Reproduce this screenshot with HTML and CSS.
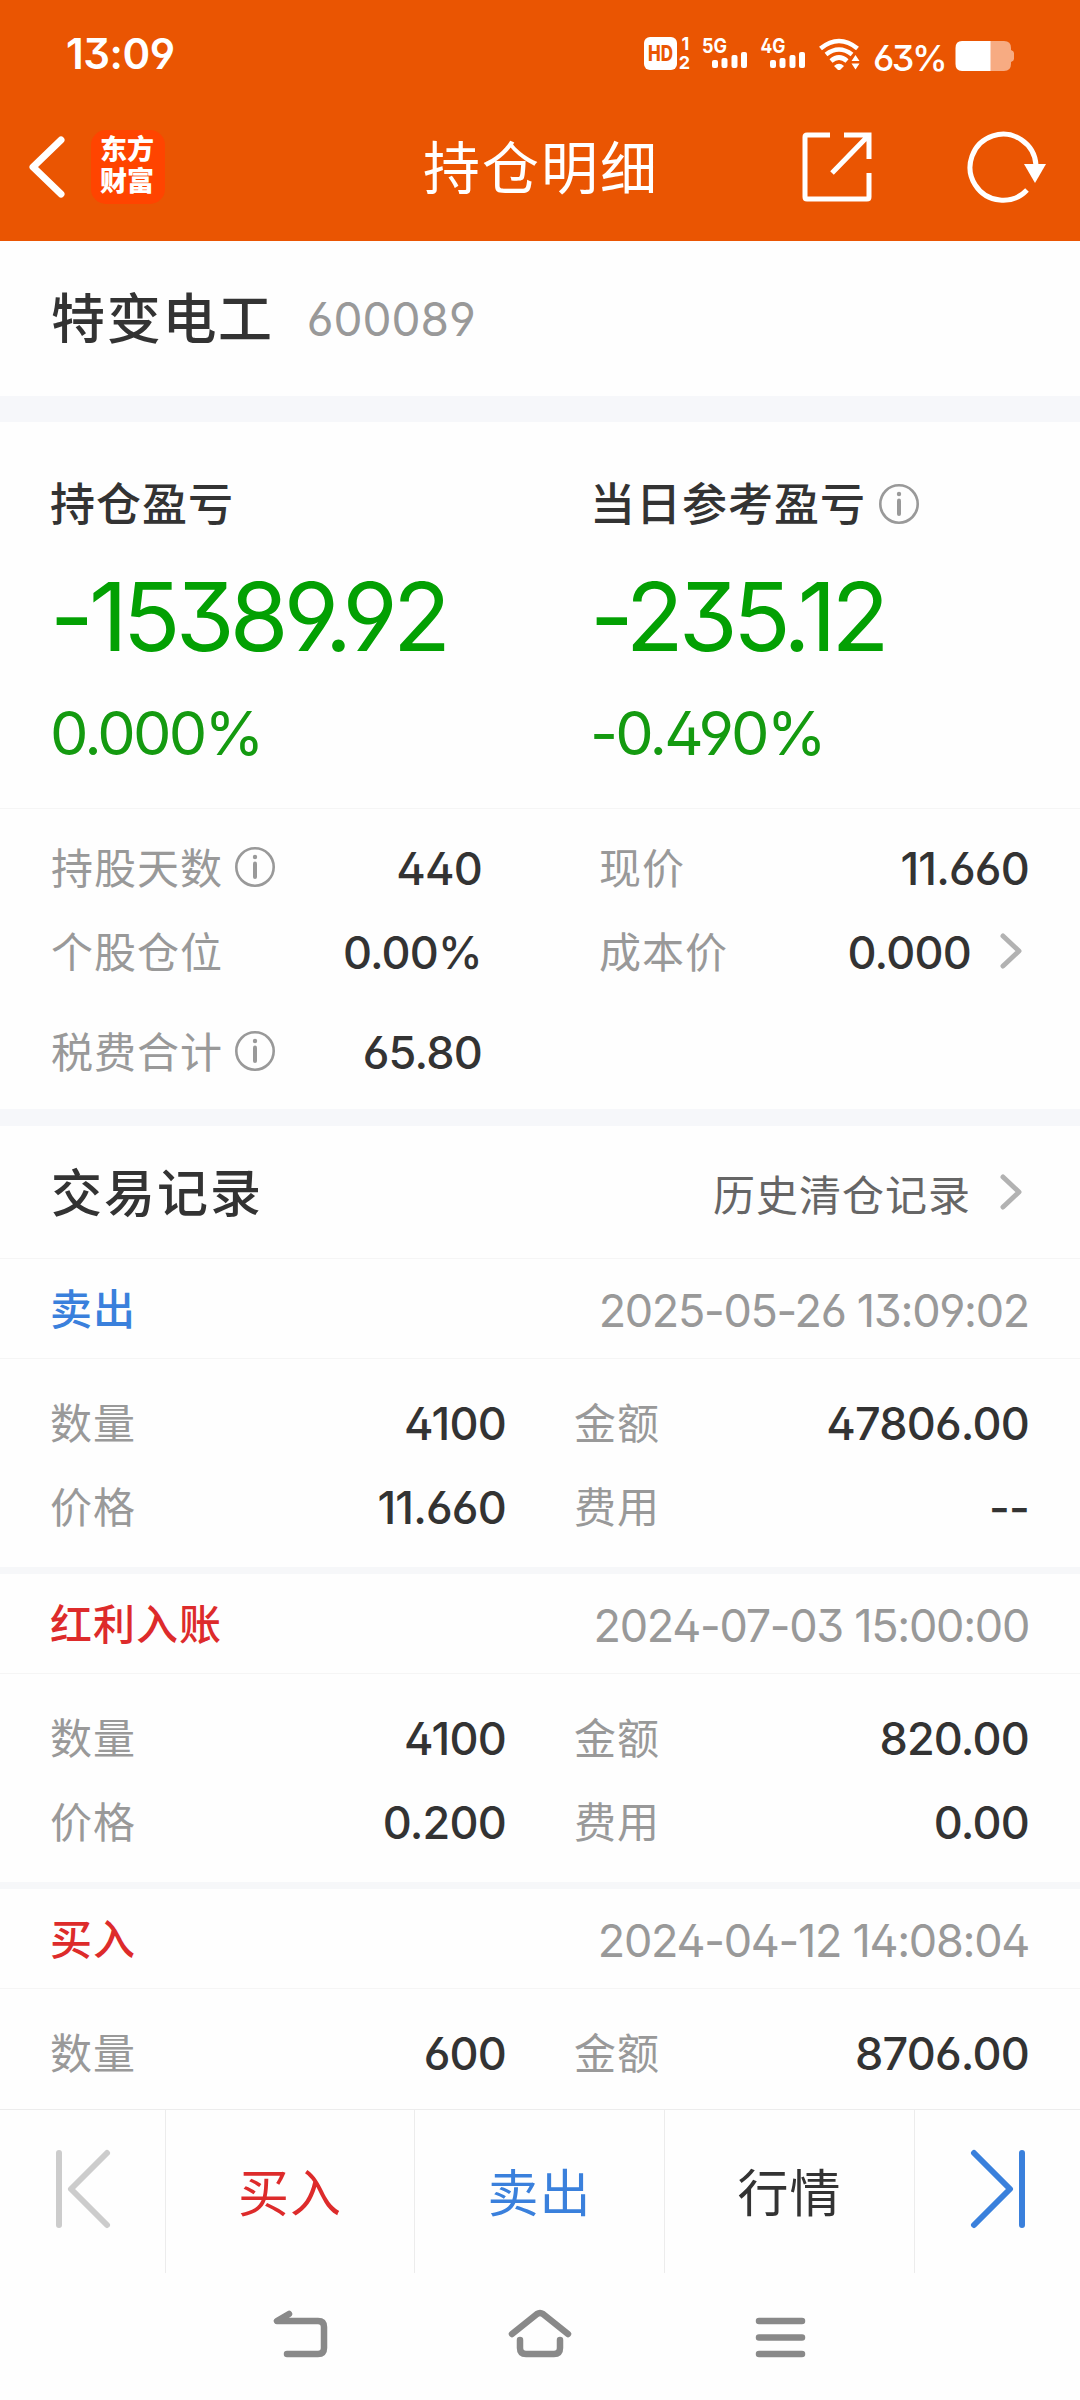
FILE: index.html
```html
<!DOCTYPE html>
<html lang="zh-CN">
<head>
    <meta charset="UTF-8">
    <meta name="viewport" content="width=device-width, initial-scale=1.0">
    <title>持仓明细</title>
    <link rel="stylesheet" href="styles.css">
</head>
<body>
    <div class="app">
        <header class="header">
            <div class="status-bar">
                <span class="time">13:09</span>
                <svg class="status-icons" width="220" height="40" viewBox="640 34 220 40" fill="#fff">
                    <rect x="644" y="37" width="33" height="33" rx="6"/>
                    <text x="660.5" y="61" class="hd" textLength="25" lengthAdjust="spacingAndGlyphs">HD</text>
                    <text x="685.5" y="50" class="sim">1</text>
                    <text x="684.5" y="69" class="sim">2</text>
                    <text x="702" y="53" class="net" textLength="25" lengthAdjust="spacingAndGlyphs">5G</text>
                    <rect x="712" y="60" width="6" height="8" rx="2"/>
                    <rect x="721.5" y="58" width="6" height="10" rx="2"/>
                    <rect x="731.5" y="55" width="6" height="13" rx="2"/>
                    <rect x="741" y="52" width="6" height="16" rx="2"/>
                    <text x="760.5" y="53" class="net" textLength="25" lengthAdjust="spacingAndGlyphs">4G</text>
                    <rect x="770" y="60" width="6" height="8" rx="2"/>
                    <rect x="779.5" y="58" width="6" height="10" rx="2"/>
                    <rect x="789.5" y="55" width="6" height="13" rx="2"/>
                    <rect x="799" y="52" width="6" height="16" rx="2"/>
                    <g fill="none" stroke="#fff" stroke-width="4.6">
                        <path d="M820.5 48.5 Q839 33.5 857.5 48.5"/>
                        <path d="M826 54.5 Q839 44.5 852 54.5"/>
                        <path d="M831 61 Q839 54 847 61"/>
                    </g>
                    <path d="M834 66 Q839 61.5 844 66 L840 70 H838 Z"/>
                    <path d="M851.5 61 L855.5 55 L859.5 61 Z M851.5 63.5 L855.5 69.5 L859.5 63.5 Z"/>
                </svg>
                <span class="battery-text">63%</span>
                <svg class="battery" width="60" height="32" viewBox="0 0 60 32">
                    <path d="M7 1 H49 Q56 1 56 8 V10 Q59 11 59 13 V19 Q59 21 56 22 V24 Q56 31 49 31 H7 Z" fill="#f7ab82"/>
                    <path d="M35.5 1 H7 Q0.5 1 0.5 8 V24 Q0.5 31 7 31 H35.5 Z" fill="#fff"/>
                </svg>
            </div>
            <div class="title-bar">
                <svg class="back" width="40" height="64" viewBox="0 0 40 64"><path d="M34 5 L6 32 L34 59"/></svg>
                <div class="logo"><span>东方</span><span>财富</span></div>
                <h1 class="title">持仓明细</h1>
                <svg class="share" width="72" height="72" viewBox="0 0 72 72">
                    <path d="M29 4 H6 Q4 4 4 6 V66 Q4 68 6 68 H66 Q68 68 68 66 V42"/>
                    <path d="M43 4 H68 V28 M67 5 L31 42"/>
                </svg>
                <svg class="refresh" width="82" height="74" viewBox="0 0 82 74">
                    <path d="M61 60 A33 33 0 1 1 70 35"/>
                    <path d="M58 34 H80 L69 53 Z" class="refresh-arrow"/>
                </svg>
            </div>
        </header>

        <main class="content">
            <section class="stock">
                <span class="stock-name">特变电工</span>
                <span class="stock-code">600089</span>
            </section>

            <section class="profit">
                <div class="profit-item">
                    <div class="profit-label">持仓盈亏</div>
                    <div class="profit-value">-15389.92</div>
                    <div class="profit-rate">0.000%</div>
                </div>
                <div class="profit-item">
                    <div class="profit-label">当日参考盈亏
                        <svg class="info" viewBox="0 0 40 40"><circle cx="20" cy="20" r="18.7"/><path d="M20 16.5 V30"/><circle cx="20" cy="10" r="2.2" class="info-dot"/></svg>
                    </div>
                    <div class="profit-value">-235.12</div>
                    <div class="profit-rate">-0.490%</div>
                </div>
            </section>

            <section class="stats">
                <div class="stat">
                    <span class="label">持股天数</span>
                    <svg class="info" viewBox="0 0 40 40"><circle cx="20" cy="20" r="18.7"/><path d="M20 16.5 V30"/><circle cx="20" cy="10" r="2.2" class="info-dot"/></svg>
                    <span class="value">440</span>
                </div>
                <div class="stat">
                    <span class="label">现价</span>
                    <span class="value">11.660</span>
                </div>
                <div class="stat">
                    <span class="label">个股仓位</span>
                    <span class="value">0.00%</span>
                </div>
                <div class="stat">
                    <span class="label">成本价</span>
                    <span class="value">0.000</span>
                    <svg class="arrow" viewBox="0 0 24 38"><path d="M4 4 L20 19 L4 34"/></svg>
                </div>
                <div class="stat">
                    <span class="label">税费合计</span>
                    <svg class="info" viewBox="0 0 40 40"><circle cx="20" cy="20" r="18.7"/><path d="M20 16.5 V30"/><circle cx="20" cy="10" r="2.2" class="info-dot"/></svg>
                    <span class="value">65.80</span>
                </div>
            </section>

            <section class="history-head">
                <h2>交易记录</h2>
                <span class="history-link">历史清仓记录</span>
                <svg class="arrow" viewBox="0 0 24 38"><path d="M4 4 L20 19 L4 34"/></svg>
            </section>

            <article class="record">
                <div class="record-head">
                    <span class="record-type sell">卖出</span>
                    <span class="record-time">2025-05-26 13:09:02</span>
                </div>
                <div class="record-body">
                    <span class="label">数量</span><span class="value">4100</span>
                    <span class="label">金额</span><span class="value">47806.00</span>
                    <span class="label">价格</span><span class="value">11.660</span>
                    <span class="label">费用</span><span class="value">--</span>
                </div>
            </article>

            <article class="record">
                <div class="record-head">
                    <span class="record-type buy">红利入账</span>
                    <span class="record-time">2024-07-03 15:00:00</span>
                </div>
                <div class="record-body">
                    <span class="label">数量</span><span class="value">4100</span>
                    <span class="label">金额</span><span class="value">820.00</span>
                    <span class="label">价格</span><span class="value">0.200</span>
                    <span class="label">费用</span><span class="value">0.00</span>
                </div>
            </article>

            <article class="record">
                <div class="record-head">
                    <span class="record-type buy">买入</span>
                    <span class="record-time">2024-04-12 14:08:04</span>
                </div>
                <div class="record-body">
                    <span class="label">数量</span><span class="value">600</span>
                    <span class="label">金额</span><span class="value">8706.00</span>
                </div>
            </article>
        </main>

        <footer class="toolbar">
            <div class="tool"><svg class="step prev" width="60" height="84" viewBox="0 0 60 84"><path d="M6 6 V78 M54 6 L18 42 L54 78"/></svg></div>
            <div class="tool buy">买入</div>
            <div class="tool sell">卖出</div>
            <div class="tool">行情</div>
            <div class="tool"><svg class="step next" width="60" height="84" viewBox="0 0 60 84"><path d="M54 6 V78 M6 6 L42 42 L6 78"/></svg></div>
        </footer>

        <nav class="sys-nav">
            <svg width="60" height="52" viewBox="0 0 60 52"><path d="M19 6 L7 13 H48 Q54 13 54 19 V40 Q54 46 48 46 H17"/></svg>
            <svg width="70" height="52" viewBox="0 0 70 52"><path d="M7 26 L32 6 Q35 4 38 6 L63 26 M15 32 V40 Q15 46 21 46 H49 Q55 46 55 40 V32"/></svg>
            <svg width="60" height="52" viewBox="0 0 60 52"><path d="M9 13 H52 M9 29.5 H52 M9 46 H52"/></svg>
        </nav>
    </div>
</body>
</html>
```
FILE: styles.css
```css
* {
    box-sizing: border-box;
    margin: 0;
    padding: 0;
}

body {
    width: 1080px;
    background: #fefefe;
    color: #333;
    font-family: "Inter", "Noto Sans CJK SC", sans-serif;
    font-feature-settings: "ss01";
    line-height: 1.2;
}

svg {
    display: block;
    flex-shrink: 0;
}

.app {
    display: flex;
    flex-direction: column;
    height: 2400px;
    overflow: hidden;
}

.content {
    flex: 1;
    overflow: hidden;
}

.sell {
    color: #3a80dc;
}

.buy {
    color: #dd2b2b;
}

/* header */
.header {
    flex-shrink: 0;
    height: 241px;
    background: #ea5502;
    color: #fff;
}

.status-bar {
    display: flex;
    align-items: center;
    height: 96px;
    padding: 12px 65px 0 66px;
}

.time {
    margin-right: auto;
    font-size: 42px;
    font-weight: 600;
    letter-spacing: -0.5px;
}

.hd {
    font-size: 21px;
    font-weight: 800;
    fill: #ea5502;
    text-anchor: middle;
}

.sim {
    font-size: 18px;
    font-weight: 700;
    text-anchor: middle;
}

.net {
    font-size: 20px;
    font-weight: 700;
}

.battery-text {
    width: 82px;
    padding-left: 13px;
    margin-top: 9px;
    font-size: 36px;
    font-weight: 500;
    letter-spacing: -2.5px;
    white-space: nowrap;
}

.battery {
    margin: 3px 0 0 13px;
}

.title-bar {
    display: flex;
    align-items: center;
    height: 144px;
    padding: 0 32px 2px 27px;
}

.back path,
.share path,
.refresh path {
    fill: none;
    stroke: #fff;
    stroke-width: 5;
}

.back path {
    stroke-width: 7;
    stroke-linecap: round;
    stroke-linejoin: round;
}

.refresh .refresh-arrow {
    fill: #fff;
    stroke: none;
}

.logo {
    display: flex;
    flex-direction: column;
    align-items: center;
    justify-content: center;
    width: 74px;
    height: 74px;
    padding: 0 2px 3px 0;
    margin-left: 24px;
    border-radius: 15px;
    background: #ff4400;
    font-size: 27px;
    font-weight: 800;
    line-height: 32px;
}

.title {
    margin: 4px 0 0 258px;
    font-size: 57px;
    font-weight: 400;
    letter-spacing: 2px;
}

.share {
    margin-left: auto;
}

.refresh {
    margin-left: 93px;
}

/* stock */
.stock {
    display: flex;
    align-items: center;
    height: 181px;
    padding: 3px 51px 0;
    border-bottom: 26px solid #f6f7fa;
}

.stock-name {
    font-size: 54px;
    font-weight: 500;
    letter-spacing: 1.7px;
}

.stock-code {
    margin-left: 33px;
    color: #999;
    font-size: 46px;
}

/* profit */
.profit {
    display: grid;
    grid-template-columns: 540px 540px;
    height: 387px;
    border-bottom: 1px solid #f5f5f5;
}

.profit-item {
    padding: 53px 0 0 50px;
}

.profit-label {
    display: flex;
    align-items: center;
    gap: 13px;
    height: 60px;
    font-size: 45px;
    font-weight: 500;
    letter-spacing: 1px;
}

.profit-value {
    height: 116px;
    margin-top: 24px;
    color: #03a003;
    font-size: 95px;
    line-height: 116px;
    letter-spacing: -4.8px;
}

.profit-rate {
    height: 76px;
    margin-top: 20px;
    color: #149a10;
    font-size: 61px;
    line-height: 76px;
    letter-spacing: -2.8px;
}

.info {
    width: 40px;
    height: 40px;
    margin-top: -2px;
    fill: none;
    stroke: #999;
    stroke-width: 2.6;
}

.info path {
    stroke-width: 4;
    stroke-linecap: round;
}

.info .info-dot {
    fill: #999;
    stroke: none;
}

/* label / value pairs */
.label {
    color: #999;
    font-size: 42px;
    letter-spacing: 1px;
}

.value {
    margin-left: auto;
    font-size: 45px;
    font-weight: 500;
    letter-spacing: -0.8px;
    text-align: right;
}

/* stats */
.stats {
    display: grid;
    grid-template-columns: 431px 430px;
    grid-template-rows: 84px 84px 116px;
    column-gap: 117px;
    height: 317px;
    padding: 18px 51px 0;
    border-bottom: 17px solid #f6f7fa;
}

.stat {
    display: flex;
    align-items: center;
}

.stat .info {
    margin: -4px 0 0 12px;
}

.arrow {
    width: 24px;
    height: 38px;
    margin: -4px 6px 0 28px;
    fill: none;
    stroke: #b2b2b2;
    stroke-width: 5;
    stroke-linecap: round;
    stroke-linejoin: round;
}

/* records */
.history-head {
    display: flex;
    align-items: center;
    height: 133px;
    padding: 4px 51px 0;
    border-bottom: 1px solid #f5f5f5;
}

.history-head h2 {
    font-size: 51px;
    font-weight: 500;
    letter-spacing: 2px;
}

.history-link {
    margin: 5px 0 0 auto;
    color: #666;
    font-size: 42px;
    letter-spacing: 1px;
}

.record {
    height: 315px;
    border-bottom: 7px solid #f6f7f9;
}

.record-head {
    display: flex;
    align-items: center;
    justify-content: space-between;
    height: 100px;
    padding: 4px 51px 0 50px;
    border-bottom: 1px solid #f5f5f5;
}

.record-type {
    font-size: 42px;
    font-weight: 500;
    letter-spacing: 1px;
}

.record-time {
    color: #999;
    font-size: 45px;
    letter-spacing: -1.3px;
}

.record-body {
    display: grid;
    grid-template-columns: 100px 424px 100px 355px;
    grid-auto-rows: 84px;
    align-items: center;
    padding: 23px 51px 0 50px;
}

.record-body .value:nth-child(4n + 2) {
    margin-right: 68px;
}

/* bottom toolbar */
.toolbar {
    display: grid;
    grid-template-columns: 166px 249px 250px 250px 165px;
    flex-shrink: 0;
    height: 164px;
    border-top: 1px solid #ececec;
}

.tool {
    display: flex;
    align-items: center;
    justify-content: center;
    padding-top: 5px;
    border-right: 1px solid #ececec;
    font-size: 51px;
    letter-spacing: 1px;
}

.tool:last-child {
    border-right: none;
}

.step {
    margin-top: -11px;
    fill: none;
    stroke: #ccc;
    stroke-width: 6;
    stroke-linecap: round;
    stroke-linejoin: round;
}

.step.next {
    stroke: #3a80dc;
}

/* system navigation */
.sys-nav {
    display: flex;
    flex-shrink: 0;
    justify-content: space-between;
    height: 127px;
    padding: 35px 270px 0;
}

.sys-nav path {
    fill: none;
    stroke: #898989;
    stroke-width: 6.5;
    stroke-linecap: round;
    stroke-linejoin: round;
}
```
